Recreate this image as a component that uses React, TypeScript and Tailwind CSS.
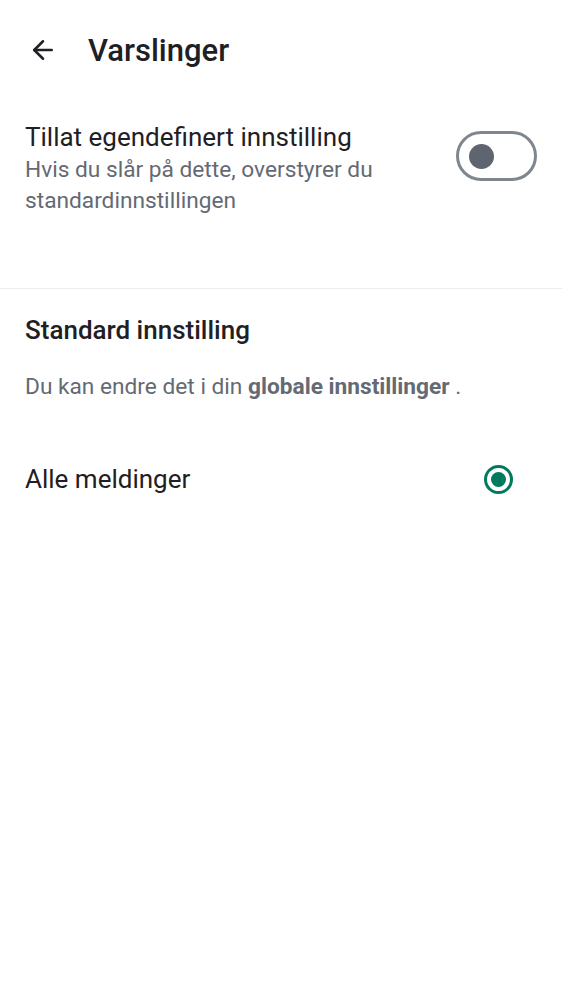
import { ArrowLeft } from 'lucide-react';

export default function App() {
  return (
    <div className="min-h-[1000px] w-[562px] bg-white font-['Roboto',sans-serif] text-[#1f2024]">
      <header className="flex h-[100px] items-center pl-[28px]">
        <ArrowLeft className="size-[30px] text-[#1f2024]" strokeWidth={2} />
        <h1 className="ml-[30px] text-[31px] font-medium leading-none">Varslinger</h1>
      </header>

      <div className="flex items-start justify-between pl-[25px] pr-[25px] pt-[20px] pb-[72px]">
        <div className="flex flex-col">
          <span className="text-[26px] leading-[34px]">Tillat egendefinert innstilling</span>
          <span className="text-[22.7px] leading-[31px] text-[#646a73]">
            Hvis du slår på dette, overstyrer du
            <br />
            standardinnstillingen
          </span>
        </div>
        <button
          type="button"
          className="mt-[11px] flex h-[50px] w-[81px] shrink-0 items-center rounded-full border-[3px] border-[#808690] pl-[10px]"
        >
          <span className="size-[25px] rounded-full bg-[#5f6570]" />
        </button>
      </div>

      <div className="h-px bg-[#ececef]" />

      <section className="px-[25px] pt-[25px]">
        <h2 className="text-[26px] font-medium leading-[32px]">Standard innstilling</h2>
        <p className="mt-[26px] text-[22.7px] leading-[30px] text-[#646a73]">
          Du kan endre det i din <span className="font-bold">globale innstillinger</span> .
        </p>
        <div className="mt-[61px] flex items-center justify-between">
          <span className="text-[26px] leading-[32px]">Alle meldinger</span>
          <span className="mr-[24px] flex size-[29px] items-center justify-center rounded-full border-[3px] border-[#007a5e]">
            <span className="size-[15px] rounded-full bg-[#007a5e]" />
          </span>
        </div>
      </section>
    </div>
  );
}
